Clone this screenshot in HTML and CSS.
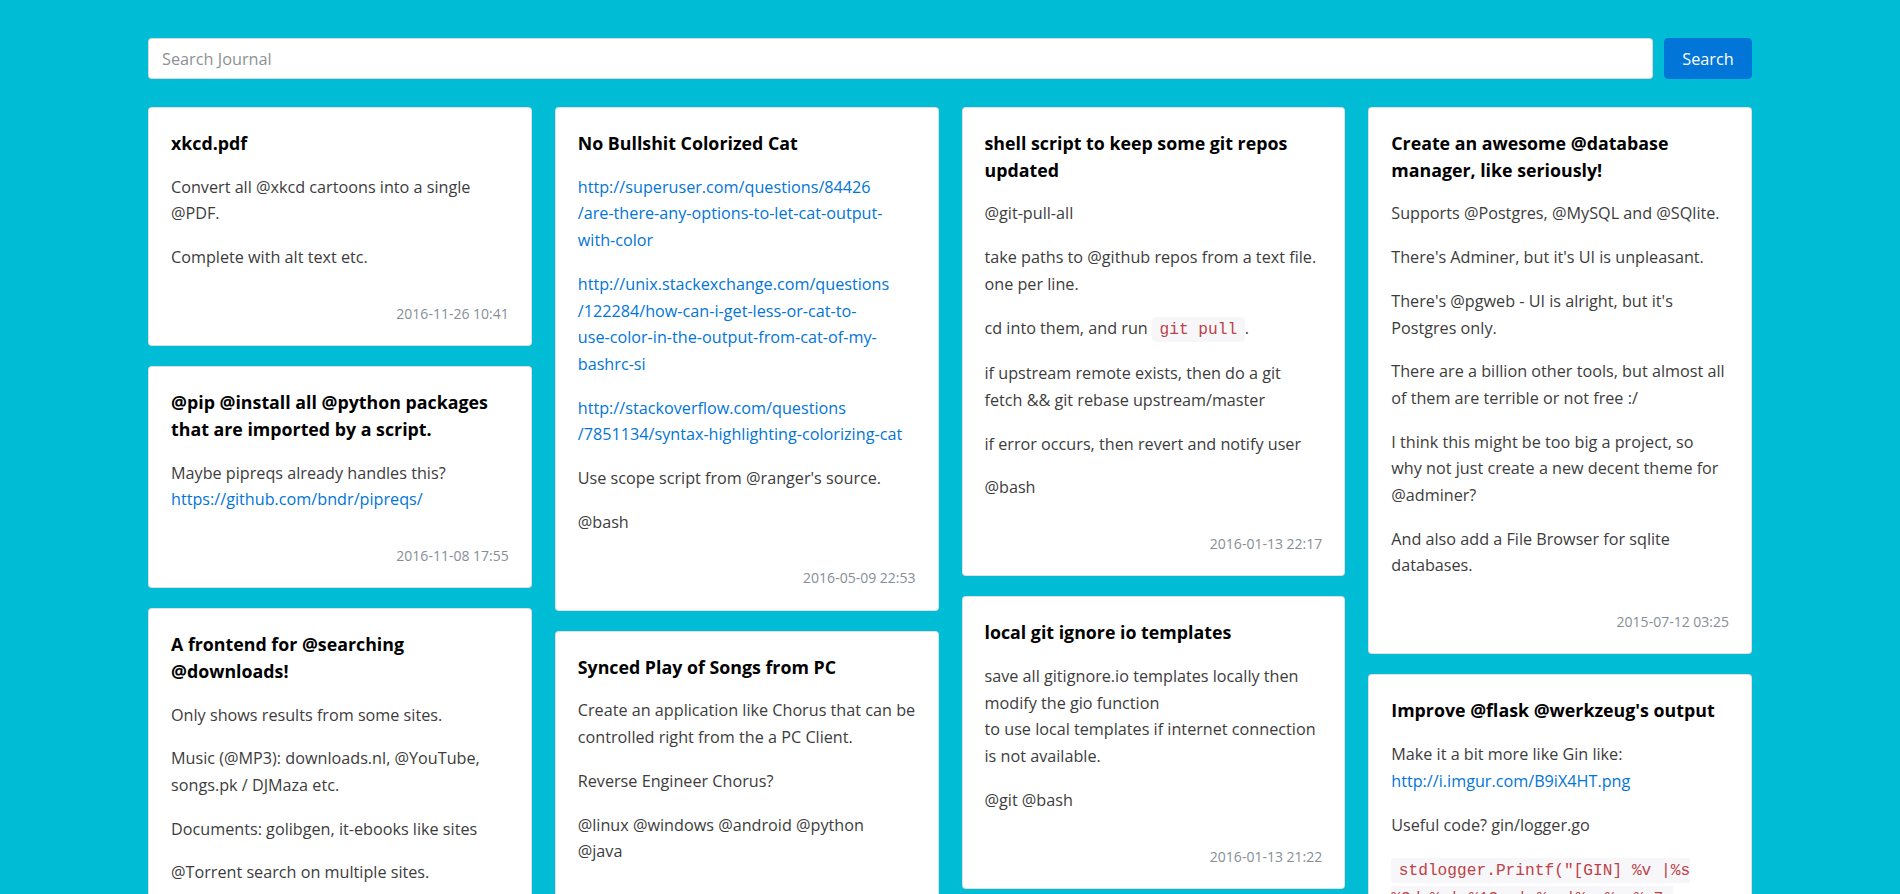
FILE: index.html
```html
<!DOCTYPE html>
<html lang="en">
<head>
<meta charset="utf-8">
<title>Journal</title>
<link rel="stylesheet" href="styles.css">
</head>
<body>
<div class="page">
  <form class="search" onsubmit="return false">
    <input class="search-input" type="text" placeholder="Search Journal">
    <button class="search-btn" type="submit">Search</button>
  </form>

  <div class="board">
    <div class="col">
      <div class="card">
        <h5 class="card-title">xkcd.pdf</h5>
        <p>Convert all @xkcd cartoons into a single @PDF.</p>
        <p>Complete with alt text etc.</p>
        <div class="stamp">2016-11-26 10:41</div>
      </div>
      <div class="card">
        <h5 class="card-title">@pip @install all @python packages that are imported by a script.</h5>
        <p>Maybe pipreqs already handles this?<br><a href="#">https://github.com/bndr/pipreqs/</a></p>
        <div class="stamp">2016-11-08 17:55</div>
      </div>
      <div class="card">
        <h5 class="card-title">A frontend for @searching @downloads!</h5>
        <p>Only shows results from some sites.</p>
        <p>Music (@MP3): downloads.nl, @YouTube, songs.pk / DJMaza etc.</p>
        <p>Documents: golibgen, it-ebooks like sites</p>
        <p>@Torrent search on multiple sites.</p>
        <div class="stamp">2016-01-10 14:02</div>
      </div>
    </div>

    <div class="col">
      <div class="card">
        <h5 class="card-title">No Bullshit Colorized Cat</h5>
        <p><a href="#">http://superuser.com/questions/84426<br>/are-there-any-options-to-let-cat-output-<br>with-color</a></p>
        <p><a href="#">http://unix.stackexchange.com/questions<br>/122284/how-can-i-get-less-or-cat-to-<br>use-color-in-the-output-from-cat-of-my-<br>bashrc-si</a></p>
        <p><a href="#">http://stackoverflow.com/questions<br>/7851134/syntax-highlighting-colorizing-cat</a></p>
        <p>Use scope script from @ranger's source.</p>
        <p>@bash</p>
        <div class="stamp">2016-05-09 22:53</div>
      </div>
      <div class="card">
        <h5 class="card-title">Synced Play of Songs from PC</h5>
        <p>Create an application like Chorus that can be controlled right from the a PC Client.</p>
        <p>Reverse Engineer Chorus?</p>
        <p>@linux @windows @android @python<br>@java</p>
        <div class="stamp">2016-02-21 19:40</div>
      </div>
    </div>

    <div class="col">
      <div class="card">
        <h5 class="card-title">shell script to keep some git repos updated</h5>
        <p>@git-pull-all</p>
        <p>take paths to @github repos from a text file. one per line.</p>
        <p>cd into them, and run <code>git pull</code>.</p>
        <p>if upstream remote exists, then do a git fetch &amp;&amp; git rebase upstream/master</p>
        <p>if error occurs, then revert and notify user</p>
        <p>@bash</p>
        <div class="stamp">2016-01-13 22:17</div>
      </div>
      <div class="card">
        <h5 class="card-title">local git ignore io templates</h5>
        <p>save all gitignore.io templates locally then<br>modify the gio function<br>to use local templates if internet connection is not available.</p>
        <p>@git @bash</p>
        <div class="stamp">2016-01-13 21:22</div>
      </div>
    </div>

    <div class="col">
      <div class="card">
        <h5 class="card-title">Create an awesome @database manager, like seriously!</h5>
        <p>Supports @Postgres, @MySQL and @SQlite.</p>
        <p>There's Adminer, but it's UI is unpleasant.</p>
        <p>There's @pgweb - UI is alright, but it's Postgres only.</p>
        <p>There are a billion other tools, but almost all of them are terrible or not free :/</p>
        <p>I think this might be too big a project, so<br>why not just create a new decent theme for @adminer?</p>
        <p>And also add a File Browser for sqlite databases.</p>
        <div class="stamp">2015-07-12 03:25</div>
      </div>
      <div class="card">
        <h5 class="card-title">Improve @flask @werkzeug's output</h5>
        <p>Make it a bit more like Gin like:<br><a href="#">http://i.imgur.com/B9iX4HT.png</a></p>
        <p>Useful code? gin/logger.go</p>
        <p><code>stdlogger.Printf("[GIN] %v |%s %3d %s| %13v | %s |%s %s %-7s %s\n%s",</code></p>
        <div class="stamp">2015-06-30 11:08</div>
      </div>
    </div>
  </div>
</div>
</body>
</html>
```

FILE: styles.css
```css
html, body {
  margin: 0;
  padding: 0;
}

body {
  background: #00bcd4;
  font-family: "Open Sans", "Noto Sans", sans-serif;
  font-size: 16.2px;
  line-height: 26.7px;
  color: #3c3c3c;
}

.page {
  width: 1604px;
  margin: 0 auto;
  padding-top: 38px;
}

.search {
  display: flex;
  gap: 11px;
  height: 41px;
  margin: 0 0 28px;
}

.search-input {
  flex: 1;
  box-sizing: border-box;
  height: 41px;
  margin: 0;
  padding: 0 13px;
  border: 1px solid rgba(0, 0, 0, 0.15);
  border-radius: 4px;
  background: #fff;
  font-family: inherit;
  font-size: 16.3px;
  color: #464a4c;
  outline: none;
}

.search-input::placeholder {
  color: #8e9194;
}

.search-btn {
  width: 88px;
  height: 41px;
  margin: 0;
  padding: 0;
  border: 1px solid #0275d8;
  border-radius: 4px;
  background: #0275d8;
  color: #fff;
  font-family: inherit;
  font-size: 16.3px;
  cursor: pointer;
}

.board {
  display: grid;
  grid-template-columns: repeat(4, 1fr);
  column-gap: 23px;
  align-items: start;
}

.col {
  display: flex;
  flex-direction: column;
  gap: 20px;
}

.card {
  background: #fff;
  border: 1px solid rgba(0, 0, 0, 0.125);
  border-radius: 4px;
  padding: 22px 22px 21px;
}

.card-title {
  margin: 0 0 17px;
  font-size: 17.8px;
  font-weight: 700;
  line-height: 26.7px;
  color: #000;
}

.card p {
  margin: 0 0 17px;
}

.card a {
  color: #0275d8;
  text-decoration: none;
}

.card code {
  font-family: "Liberation Mono", "DejaVu Sans Mono", monospace;
  font-size: 16.2px;
  padding: 3.5px 7.5px;
  color: #bd4147;
  background: #f7f7f9;
  border-radius: 4px;
}

.stamp {
  margin-top: 32px;
  font-size: 14px;
  line-height: 21.3px;
  text-align: right;
  color: #868e96;
}
```
